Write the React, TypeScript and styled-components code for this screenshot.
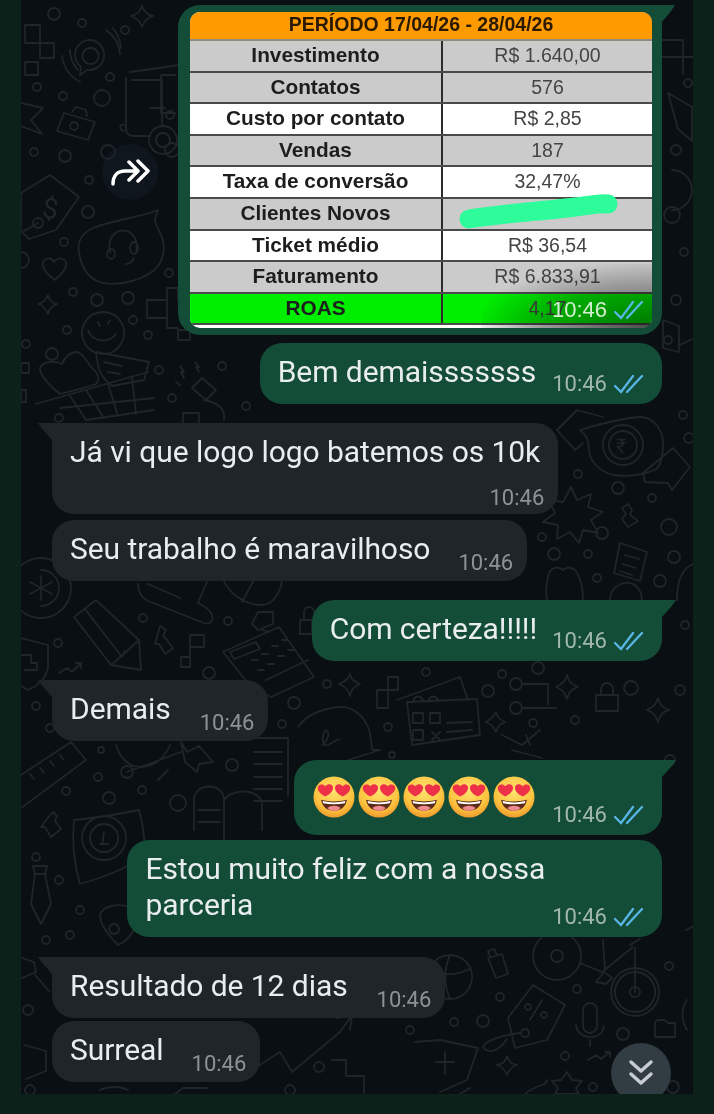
import React from "react";
import styled, { createGlobalStyle } from "styled-components";

const GlobalStyle = createGlobalStyle`
  html, body {
    margin: 0;
    padding: 0;
    background: #0b2119;
  }
`;

const RINGS = [
  // top left
  [54, 14, 6], [82, 23, 4], [125, 30, 4], [37, 87, 4], [63, 96, 4], [102, 98, 8], [110, 77, 4], [65, 156, 6],
  [34, 152, 4], [89, 180, 4], [108, 152, 7], [170, 115, 4], [172, 150, 7], [38, 223, 5], [88, 212, 6], [64, 242, 4],
  [21, 260, 8], [73, 292, 4], [97, 300, 6], [128, 298, 6], [169, 273, 4], [133, 320, 4], [67, 330, 4], [148, 335, 4],
  [26, 344, 4], [52, 354, 6], [159, 370, 4], [222, 366, 4], [172, 398, 4], [246, 406, 4], [59, 418, 4],
  // top right
  [688, 83, 4], [676, 150, 5], [672, 215, 8], [684, 252, 4], [676, 300, 5], [668, 340, 4],
  // right of the incoming bubbles
  [578, 474, 4], [618, 488, 6], [652, 498, 4], [669, 527, 8], [602, 533, 6], [542, 537, 4], [554, 554, 6], [588, 554, 4],
  [674, 557, 6], [660, 581, 6], [597, 578, 4], [683, 415, 4], [689, 438, 5],
  // left middle
  [143, 618, 4], [228, 621, 4], [209, 673, 6], [58, 643, 4], [36, 706, 4], [50, 728, 4], [294, 703, 6], [282, 724, 4],
  [327, 684, 4], [388, 727, 4], [426, 672, 4], [502, 674, 4], [538, 668, 6], [488, 691, 6], [516, 684, 6], [516, 708, 6],
  [533, 723, 4], [392, 755, 3], [631, 688, 7], [575, 720, 4], [685, 625, 4], [680, 690, 5],
  // under Demais
  [101, 750, 3], [127, 772, 6], [98, 777, 4], [66, 791, 4], [109, 798, 6], [142, 790, 4], [178, 803, 8], [232, 765, 6],
  [36, 857, 4], [59, 880, 4], [80, 910, 4], [46, 940, 4], [70, 935, 4], [28, 1010, 5], [670, 760, 5],
  // bottom right
  [577, 989, 4], [500, 997, 4], [483, 1021, 6], [454, 1022, 4], [669, 966, 4], [623, 1034, 6], [565, 1056, 4],
  [593, 1087, 4], [673, 1087, 6], [525, 1033, 4], [319, 1067, 5], [290, 1090, 5], [557, 956, 6], [635, 992, 5], [410, 1030, 4],
  [30, 1090, 5],
];

const DOODLES = [
  // tetris, radar, diamond
  "M25 25h15v18h14v15H40v-15H25zM25 62h13v13H25z",
  "M91 40a15 15 0 1 1-4 30l-7 5 1-8a15 15 0 0 1 10-27zM91 48a8 8 0 1 1-1 0M106 30a32 32 0 0 1 14 24M113 28a40 40 0 0 1 8 20M62 56a35 35 0 0 0 18 26M70 50a28 28 0 0 0 8 20",
  "M142 6c2 6 5 9 11 10-6 2-9 5-11 11-2-6-5-9-11-11 6-1 9-4 11-10z",
  // briefcase and arrow
  "M64 113l31 9-7 18-31-9zM72 112l4-5 10 3 1 6M74 122a4 4 0 1 0 .1 0",
  "M21 103l22 5-12 12 11 14-21-8",
  // cart
  "M130 72l50-7M126 78v50c0 6 4 8 8 8h16M132 80h30v46M124 125c-4-2-6 4 0 6M175 75h-14v38h14M150 108h15",
  "M163 126a14 14 0 1 0 .1 0M163 133a7 7 0 1 0 .1 0",
  // dollar tag
  "M50 175l29 22-23 33-27 9-8-8v-38zM38 223l-14 8",
  // headset pouch
  "M158 210c-20 8-45 10-65 18-12 6-16 14-14 24 2 14 8 24 18 29 14 6 40 2 56-10 10-8 12-20 10-30-2-10-8-14-8-22zM110 253c-6-30 32-30 26 0M107 254a4 5 0 1 0 8 0 4 5 0 1 0-8 0M130 248a4 6 0 1 0 8 0 4 6 0 1 0-8 0M134 258c-2 4-4 6-8 6",
  "M54 262c3-6 14-4 12 4-1 6-8 10-11 14-4-3-11-8-12-14-1-8 8-10 11-4z",
  "M48 295c1 5 3 7 9 9-5 2-8 5-9 10-2-5-4-8-10-10 6-2 8-4 10-9z",
  "M147 300h20v-12h11v12M147 300v18h20v10h11M167 300v18M178 330h12v10h-12z",
  // smiley over the basket
  "M103 312a21 21 0 1 0 .1 0M88 330c4 12 20 14 28 4M98 322l2 4M110 320l-2 4",
  "M96 352l53 10-5 18-32 6c-4-4-14-8-16-34zM104 362l18 4M108 372l12 2",
  "M78 352c8 4 10 14 18 20 4 6 2 10 0 12-10 4-22 6-36 10-10-8-20-18-20-26 2-6 14-8 22-4 4-10 10-12 16-12z",
  "M36 404l112-32M70 396l16 24M86 390l18 28M108 384l10 32M132 378l4 36M60 408l94-10M86 420l68-10",
  "M21 363h8v10h-8zM21 390h5v12h-5z",
  // plug and bolts
  "M192 388l10-10 14 12-10 10zM204 400c12 2 22 8 20 20M180 366l4 6-3 0 3 6M195 362l4 5-3 0 3 5M176 382l4 3M183 413h16v14h-16z",
  // top right
  "M662 40h21v17h10M662 57h21v17M645 14l12 14-20 6z",
  "M668 93l24 14v34l-14-12z",
  "M663 320l16 6v26l-16-4zM680 345l12-6",
  "M672 170a20 20 0 1 1 0 40",
  // rupee pouch and arrows
  "M580 430c20-6 45-12 60-13 14 0 24 14 23 28 0 10-2 18-6 24-14 6-30 8-44 6-14-4-24-14-24-26 0-8-2-14-9-19zM623 425a20 20 0 1 1-.1 0M623 431a14 14 0 1 1-.1 0",
  "M603 417l-26-7-20 20 18 20 8-7M643 473l30-25 17 19-18 23-4-7-23-1z",
  // burst, core, doc
  "M571 487l6 13 14-6-3 13 15 5-12 8 7 13-15-3-4 13-9-11-13 7 1-14-15-3 12-9-6-13 14 2z",
  "M622 508l6-4 4 6-2 5 8 6-10 6-6-8 4-5z",
  "M620 543l27 9-7 29-26-8zM625 555l14 4M622 564l14 4M620 571l12 4",
  "M547 600c-2-10 0-24 4-30 4-4 10-2 12 0 4-4 10-2 12 0 6 8 8 20 8 30M610 600c0-14 16-22 26-14 4 4 6 8 6 14M677 600c0-20 6-32 16-36",
  // asterisk coin, half wheel
  "M41 558a30 30 0 1 1-.1 0M41 570a18 18 0 0 1 0 36M41 576v24M30 582l22 12M52 582l-22 12",
  "M138 584c0 8 4 14 10 17l56 22c6 2 10-2 8-8-2-6-10-10-14-12l10-24M148 584l32 14",
  "M222 577c6 16 22 28 40 28 10 0 20-12 20-28M242 602l14-26",
  // pencil, shield, core, tetris
  "M96 600l-22 17 37 48 30 5-2-30zM85 609l37 48M111 665l14-12 14-13M122 657l3-6",
  "M21 638l27 7v23c-2 10-10 18-20 22l-7-4M21 655h10v8h6v7h-12",
  "M59 673l8-5 5 4 9-9-5 0M81 663v5",
  "M160 626l6 4-3 6 4 4 6 8-8 6-6-10-4 0z",
  "M190 635h14v12h-14v20h-9v-10h9z",
  // calculator and note
  "M223 652l56-25 35 50-43 20-20-10zM230 652l26-10 4 7-26 10zM258 612h15v12l-15 6-6-6zM262 630l8 2M252 660h6M262 654h6M272 646h6M282 640h6M258 670h6M268 664h6M278 656h6M288 650h6M266 680l42-20",
  "M304 620v-8a5 5 0 0 1 10 0M300 620h12v14h-12z",
  // tetris, star, signature bubble, cards
  "M377 690h11v-13h10v13h-10v18h-11z",
  "M350 674c1 5 3 7 10 10-6 2-9 5-10 12-2-7-5-10-11-12 7-3 9-5 11-10z",
  "M298 727c8-12 24-18 40-20 12-1 24 6 30 20 4 10 2 18 5 23l7 0-32 10M322 745c6-4 8-12 5-14-4-2-6 10-2 14 4 2 8-4 14-6",
  "M397 700l63-23 8 23M407 702l70-3 3 36-68 10zM413 713h10v10h-10zM430 713h10v10h-10zM413 730h10v10h-10zM447 723l25-1M447 732l25-2M413 702c2-8 8-6 10-2M428 702c2-8 8-6 10-2M432 732l8 8M440 732l-8 8",
  // wires, stars, gift
  "M522 684h26v20M522 708h34",
  "M496 712c1 5 3 7 9 10-5 2-8 5-9 10-2-5-5-8-10-10 5-3 8-5 10-10z",
  "M567 675c2 7 4 9 11 12-7 2-9 5-11 12-2-7-5-10-11-12 6-3 9-5 11-12z",
  "M658 698c2 7 4 9 11 12-7 2-9 5-11 12-2-7-5-10-11-12 6-3 9-5 11-12z",
  "M601 695v-6a6 6 0 0 1 12 0v6M596 695h22v16h-22z",
  "M502 735l20 10 18-15M530 745l-4-10M542 758l-30-8",
  // ruler and gear
  "M21 775l50-33 15 18-65 48M30 774l4 5M40 768l4 5M50 761l4 5M60 755l4 5",
  "M116 745c4 14 14 22 24 22 14 0 24-8 30-22M127 772l54-20M181 742l6 10 12-6 14 16-14 2-2 8-12-10-4-20",
  "M168 770l-10 10",
  // document, burger
  "M249 738h39v58M254 752h28M254 764h28M254 777h28M254 789h28M254 801h28",
  "M194 830v-30c0-18 30-18 30 0v40M198 810h22M198 822h22M224 800c8-12 36-12 38 4v26",
  "M53 812l4 4-2 5 6 8-10 8-6-10-4 0 6-8z",
  // pound doc, tie, pin
  "M74 820c20-2 46-6 65-10 4 14 6 30 6 46-20 14-50 24-65 28-6-20-8-44-6-64zM104 816a22 22 0 1 0 .1 0M104 824a14 14 0 1 0 .1 0M100 844h8M104 832c-2 6 1 10-3 12",
  "M33 866h14l-2 8 6 30-10 20-10-20 4-30zM34 874h12",
  "M100 915c2-10 24-14 34-4 6 12-2 28-16 34-8-8-18-20-18-30zM114 924a5 5 0 1 0 .1 0",
  "M22 958l12 4 2 10-14 6M35 975l14 16",
  // globe, lock
  "M450 955a22 22 0 1 0 .1 0M433 970c12 6 24 6 38-2M450 955c-6 14-6 30 0 44",
  "M488 958l14-4 6 20-12 4zM490 957l-2-6 6-2 3 6",
  // bike
  "M557 932a24 24 0 1 0 .1 0M635 968a24 24 0 1 0 .1 0M635 972a20 20 0 1 0 .1 0M580 963l22 9 31-25M603 940l2 30M635 948v44M596 982l8-10 8 6-6 6zM630 945l10-6",
  // percent tag, string, mic
  "M533 985l32 20-18 35-32 8-7-30zM528 1004a3 3 0 1 0 .1 0M544 1012a3 3 0 1 0 .1 0M530 1020l12-20M483 1047c4-8 22-12 37-14M483 1047c6 8 16 4 24-8",
  "M583 1010a7 7 0 0 1 14 0v16a7 7 0 0 1-14 0zM576 1024c0 16 26 18 28 2M590 1040v6",
  "M588 1060l8-5 5 4 9-7-5 0M610 1052v5",
  "M655 1024c0-4 2-4 6-4h4l3 3h7v14h-20z",
  // bag, stars, trend
  "M415 1042l25-2 38 8-11 32-27 12M445 1052v22M436 1062h18",
  "M507 1056c2 6 4 8 10 9-6 2-8 5-10 10-2-5-4-8-10-10 6-1 8-3 10-9z",
  "M567 1072l5 8 10 1-6 7 3 6h-24l3-6-6-7 9-1z",
  "M255 1068l25-16 12 20 48-40 10-14M336 1018l16-2-2 14",
  "M332 1060h14v16h18v17",
  "M525 1094c6-6 14-8 20-10l2-4",
  "M687 1000c-6 8-6 20 0 30M686 930l8-4",
  "M24 1045l22 6v20l-20 8",
  "M100 1090c8-4 20-4 28 0M175 1094l8-6 24 0",
  "M460 1094l10-6",
];

const TABLE_ROWS = [
  { label: "Investimento", value: "R$ 1.640,00", tone: "gray" },
  { label: "Contatos", value: "576", tone: "gray" },
  { label: "Custo por contato", value: "R$ 2,85", tone: "white" },
  { label: "Vendas", value: "187", tone: "gray" },
  { label: "Taxa de conversão", value: "32,47%", tone: "white" },
  { label: "Clientes Novos", value: "", tone: "gray" },
  { label: "Ticket médio", value: "R$ 36,54", tone: "white" },
  { label: "Faturamento", value: "R$ 6.833,91", tone: "gray" },
  { label: "ROAS", value: "4,17", tone: "green" },
];

const TONES: Record<string, string> = {
  gray: "#cbcbcb",
  white: "#ffffff",
  green: "#00ee00",
};

const Page = styled.div`
  width: 714px;
  height: 1114px;
  padding: 0 21px 20px;
  box-sizing: border-box;
  background: #0b2119;
  font-family: Roboto, "Liberation Sans", sans-serif;
  overflow: hidden;
  filter: blur(0.55px);
`;

const Chat = styled.main`
  position: relative;
  height: 1094px;
  padding: 5px 31px 0;
  box-sizing: border-box;
  background: #0a0f13;
  overflow: hidden;
  display: flex;
  flex-direction: column;
`;

const WallpaperSvg = styled.svg`
  position: absolute;
  inset: 0;
  width: 672px;
  height: 1094px;
  fill: none;
  stroke: #20252a;
  stroke-width: 1.8;
  stroke-linejoin: round;
  stroke-linecap: round;
`;

const Bubble = styled.div<{ $out?: boolean; $tail?: boolean; $top: number; $stacked?: boolean; $gap?: number }>`
  position: relative;
  align-self: ${(p) => (p.$out ? "flex-end" : "flex-start")};
  margin-top: ${(p) => p.$top}px;
  display: flex;
  flex-direction: ${(p) => (p.$stacked ? "column" : "row")};
  align-items: ${(p) => (p.$stacked ? "stretch" : "flex-end")};
  gap: ${(p) => p.$gap ?? 0}px;
  padding: 11px ${(p) => (p.$out ? 18 : 14)}px 7px 18px;
  border-radius: 22px;
  ${(p) => p.$tail && (p.$out ? "border-top-right-radius: 0;" : "border-top-left-radius: 0;")}
  background: ${(p) => (p.$out ? "#144d37" : "#1f2529")};

  ${(p) =>
    p.$tail &&
    `&::after {
      content: "";
      position: absolute;
      top: 0;
      ${p.$out ? "left: 100%;" : "right: 100%;"}
      width: 14px;
      height: 17px;
      background: ${p.$out ? "#144d37" : "#1f2529"};
      clip-path: ${p.$out ? "polygon(0 0, 100% 0, 70% 35%, 0 100%)" : "polygon(0 0, 100% 0, 100% 100%, 30% 35%)"};
    }`}
`;

const MessageText = styled.div<{ $inset?: number; $flush?: boolean }>`
  padding-bottom: ${(p) => (p.$flush ? 0 : 7)}px;
  padding-right: ${(p) => p.$inset ?? 0}px;
  font-size: 30px;
  line-height: 36px;
  letter-spacing: -0.06px;
  color: #e9edef;
  white-space: nowrap;
`;

const Meta = styled.div<{ $stacked?: boolean; $incoming?: boolean }>`
  display: flex;
  align-items: center;
  justify-content: flex-end;
  gap: 7px;
  flex-shrink: 0;
  ${(p) => p.$incoming && "margin-bottom: -2px;"}
  ${(p) => p.$stacked && "margin: 15px 0 -4px;"}
`;

const Time = styled.span<{ $out?: boolean }>`
  font-size: 22px;
  line-height: 26px;
  color: ${(p) => (p.$out ? "#a3b8ad" : "#8d9295")};
`;

const ImageRow = styled.div`
  display: flex;
  align-items: center;
  justify-content: flex-end;
  gap: 20px;
`;

const ForwardButton = styled.div`
  width: 56px;
  height: 56px;
  border-radius: 50%;
  background: rgba(22, 32, 44, 0.4);
  display: flex;
  align-items: center;
  justify-content: center;
  margin-top: 4px;
`;

const ImageBubble = styled.div`
  position: relative;
  width: 462px;
  padding: 7px 10px 7px 12px;
  background: #144d37;
  border-radius: 22px 0 22px 22px;

  &::after {
    content: "";
    position: absolute;
    top: 0;
    left: 100%;
    width: 13px;
    height: 17px;
    background: #144d37;
    clip-path: polygon(0 0, 100% 0, 70% 35%, 0 100%);
  }
`;

const Sheet = styled.div`
  position: relative;
  height: 316px;
  background: linear-gradient(90deg, #ffffff 60%, #9a9a9a);
  border-radius: 10px;
  overflow: hidden;
  font-family: "Liberation Sans", Arial, sans-serif;
  color: #1d1d1d;
`;

const SheetTitle = styled.div`
  height: 25px;
  padding-bottom: 2px;
  background: #ff9a00;
  border-bottom: 2px solid #8f8a80;
  display: flex;
  align-items: center;
  justify-content: center;
  font-size: 19.5px;
  font-weight: 700;
  color: #2b1a02;
`;

const SheetRow = styled.div<{ $tone: string }>`
  height: 29.6px;
  display: grid;
  grid-template-columns: 253px 1fr;
  background: ${(p) => TONES[p.$tone]};
  border-bottom: 2px solid #4a4a4a;
  font-size: 19.5px;
  line-height: 29px;
  text-align: center;
`;

const SheetLabel = styled.div`
  font-size: 20.8px;
  line-height: 28px;
  font-weight: 700;
  border-right: 2px solid #2c2c2c;
`;

const SheetValue = styled.div`
  color: #444444;
`;

const SheetShade = styled.div`
  position: absolute;
  right: 0;
  bottom: 0;
  width: 170px;
  height: 64px;
  background: radial-gradient(ellipse at 100% 100%, rgba(0, 0, 0, 0.5), rgba(0, 0, 0, 0.28) 45%, transparent 75%);
`;

const Marker = styled.svg`
  position: absolute;
  left: 265px;
  top: 175px;
  width: 170px;
  height: 48px;
`;

const SheetMeta = styled.div`
  position: absolute;
  right: 8px;
  bottom: 5px;
  display: flex;
  align-items: center;
  gap: 7px;
`;

const SheetTime = styled.span`
  font-size: 22px;
  line-height: 26px;
  color: #d5efd3;
`;

const EmojiRow = styled.div`
  display: flex;
  gap: 3px;
  padding: 5px 0 10px 1px;
`;

const ScrollButton = styled.div`
  position: absolute;
  right: 22px;
  bottom: -9px;
  width: 60px;
  height: 60px;
  border-radius: 50%;
  background: #323c43;
  display: flex;
  align-items: center;
  justify-content: center;
`;

const Wallpaper = () => (
  <WallpaperSvg viewBox="21 0 672 1094">
    {DOODLES.map((d, i) => (
      <path key={i} d={d} />
    ))}
    {RINGS.map(([cx, cy, r], i) => (
      <circle key={i} cx={cx} cy={cy} r={r} />
    ))}
    <text x="43" y="218" fontSize="28" fontFamily="Roboto" fill="#20252a" stroke="none" transform="rotate(8 50 205)">
      $
    </text>
    <text x="616" y="453" fontSize="20" fontFamily="Roboto" fill="#20252a" stroke="none">
      ₹
    </text>
  </WallpaperSvg>
);

const Ticks = () => (
  <svg width="30" height="20" viewBox="0 0 30 20" fill="none" stroke="#58b6e6" strokeWidth="2.3" strokeLinecap="round">
    <path d="M1 12l6 6L19 2M13 18L28 2" />
  </svg>
);

const HeartEyes = () => (
  <svg width="42" height="42" viewBox="0 0 44 44">
    <defs>
      <radialGradient id="face" cx="50%" cy="35%" r="65%">
        <stop offset="0%" stopColor="#ffe36e" />
        <stop offset="70%" stopColor="#fcc440" />
        <stop offset="100%" stopColor="#ee9a2c" />
      </radialGradient>
    </defs>
    <circle cx="22" cy="22" r="21.5" fill="url(#face)" />
    <path d="M8.500 25c9 2.400 18 2.400 27 0-1 7.500-6.500 11.500-13.500 11.500S9.500 32.500 8.500 25z" fill="#5c2b1a" />
    <path d="M15 33.500c4-3 10-3 14 0-2 2-4.500 3-7 3s-5-1-7-3z" fill="#ef8a8f" />
    <path d="M10 26.300c8 1.800 16 1.800 24 0l-.6 2.200c-7.500 1.500-15.300 1.500-22.800 0z" fill="#fff" />
    <path d="M13 21.500c-4.500-2.500-8-5.500-8-9 0-3.800 5-5 8-1.800 2.700-3.400 8-2.400 8 1.600 0 3.700-3.400 6.700-8 9.200z" fill="#ee3048" />
    <path d="M31 21.500c-4.600-2.500-8-5.500-8-9.200 0-4 5.300-5 8-1.600 3-3.200 8-2 8 1.800 0 3.500-3.500 6.500-8 9z" fill="#ee3048" />
  </svg>
);

const MetaOut = () => (
  <Meta>
    <Time $out>10:46</Time>
    <Ticks />
  </Meta>
);

const MetaIn = () => (
  <Meta $incoming>
    <Time>10:46</Time>
  </Meta>
);

export default function App() {
  return (
    <>
      <GlobalStyle />
      <Page>
        <Chat>
          <Wallpaper />
          <ImageRow>
            <ForwardButton>
              <svg width="40" height="30" viewBox="0 0 40 30" fill="none" stroke="#fff" strokeWidth="3.5" strokeLinecap="round" strokeLinejoin="round">
                <path d="M3 27c0-9 5-13 12-13h10M19 5l9 9-9 9M28 4l10 10-10 10" />
              </svg>
            </ForwardButton>
            <ImageBubble>
              <Sheet>
                <SheetTitle>PERÍODO 17/04/26 - 28/04/26</SheetTitle>
                {TABLE_ROWS.map((row) => (
                  <SheetRow key={row.label} $tone={row.tone}>
                    <SheetLabel>{row.label}</SheetLabel>
                    <SheetValue>{row.value}</SheetValue>
                  </SheetRow>
                ))}
                <Marker viewBox="0 0 170 48">
                  <path d="M14 32C50 26 90 24 120 20c12-1 24-4 33-3" fill="none" stroke="#2efb9a" strokeWidth="19" strokeLinecap="round" />
                </Marker>
                <SheetShade />
                <SheetMeta>
                  <SheetTime>10:46</SheetTime>
                  <Ticks />
                </SheetMeta>
              </Sheet>
            </ImageBubble>
          </ImageRow>

          <Bubble $out $top={8} $gap={16}>
            <MessageText>Bem demaisssssss</MessageText>
            <MetaOut />
          </Bubble>

          <Bubble $tail $top={19} $stacked>
            <MessageText $inset={4} $flush>
              Já vi que logo logo batemos os 10k
            </MessageText>
            <Meta $stacked>
              <Time>10:46</Time>
            </Meta>
          </Bubble>

          <Bubble $top={6} $gap={28}>
            <MessageText>Seu trabalho é maravilhoso</MessageText>
            <MetaIn />
          </Bubble>

          <Bubble $out $tail $top={19} $gap={15}>
            <MessageText>Com certeza!!!!!</MessageText>
            <MetaOut />
          </Bubble>

          <Bubble $tail $top={19} $gap={29}>
            <MessageText>Demais</MessageText>
            <MetaIn />
          </Bubble>

          <Bubble $out $tail $top={19} $gap={17}>
            <EmojiRow>
              <HeartEyes />
              <HeartEyes />
              <HeartEyes />
              <HeartEyes />
              <HeartEyes />
            </EmojiRow>
            <MetaOut />
          </Bubble>

          <Bubble $out $top={5} $gap={7}>
            <MessageText>
              Estou muito feliz com a nossa
              <br />
              parceria
            </MessageText>
            <MetaOut />
          </Bubble>

          <Bubble $tail $top={20} $gap={29}>
            <MessageText>Resultado de 12 dias</MessageText>
            <MetaIn />
          </Bubble>

          <Bubble $top={3} $gap={28}>
            <MessageText>Surreal</MessageText>
            <MetaIn />
          </Bubble>

          <ScrollButton>
            <svg width="26" height="28" viewBox="0 0 26 28" fill="none" stroke="#c6ccd0" strokeWidth="3.5" strokeLinecap="round" strokeLinejoin="round">
              <path d="M3 3l10 9 10-9M3 15l10 9 10-9" />
            </svg>
          </ScrollButton>
        </Chat>
      </Page>
    </>
  );
}
